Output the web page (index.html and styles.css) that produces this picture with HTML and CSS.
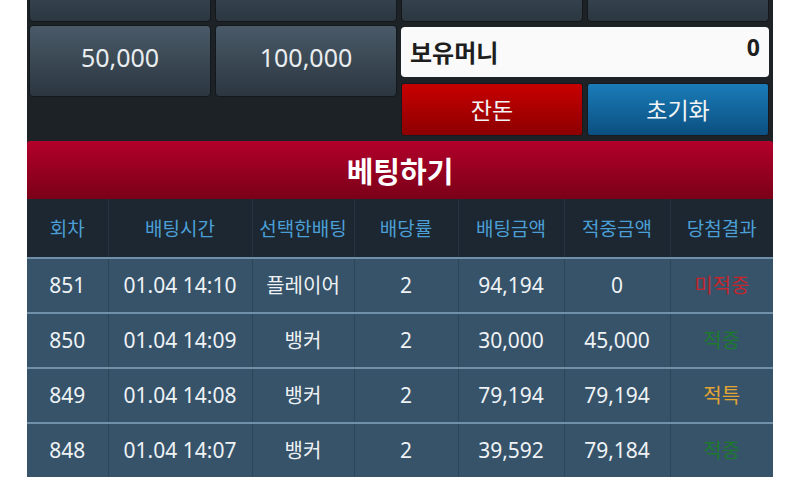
FILE: index.html
```html
<!DOCTYPE html>
<html lang="ko">
<head>
<meta charset="utf-8">
<title>베팅하기</title>
<link rel="stylesheet" href="styles.css">
</head>
<body>
<div class="panel">
  <div class="chips">
    <div class="chip-row">
      <button class="chip" aria-label="1,000"></button>
      <button class="chip" aria-label="5,000"></button>
      <button class="chip" aria-label="10,000"></button>
      <button class="chip" aria-label="30,000"></button>
    </div>
    <div class="controls">
      <div class="chip-pair">
        <button class="chip">50,000</button>
        <button class="chip">100,000</button>
      </div>
      <div class="wallet">
        <div class="money"><span class="money-label">보유머니</span><span class="money-value">0</span></div>
        <div class="actions">
          <button class="act red">잔돈</button>
          <button class="act blue">초기화</button>
        </div>
      </div>
    </div>
  </div>
  <div class="bet-bar">베팅하기</div>
  <table class="history">
    <colgroup>
      <col class="c1"><col class="c2"><col class="c3"><col class="c4"><col class="c5"><col class="c6"><col class="c7">
    </colgroup>
    <thead>
      <tr><th>회차</th><th>배팅시간</th><th>선택한배팅</th><th>배당률</th><th>배팅금액</th><th>적중금액</th><th>당첨결과</th></tr>
    </thead>
    <tbody>
      <tr><td>851</td><td>01.04 14:10</td><td class="ko">플레이어</td><td>2</td><td>94,194</td><td>0</td><td class="ko lose">미적중</td></tr>
      <tr><td>850</td><td>01.04 14:09</td><td class="ko">뱅커</td><td>2</td><td>30,000</td><td>45,000</td><td class="ko win">적중</td></tr>
      <tr><td>849</td><td>01.04 14:08</td><td class="ko">뱅커</td><td>2</td><td>79,194</td><td>79,194</td><td class="ko tie">적특</td></tr>
      <tr><td>848</td><td>01.04 14:07</td><td class="ko">뱅커</td><td>2</td><td>39,592</td><td>79,184</td><td class="ko win">적중</td></tr>
    </tbody>
  </table>
</div>
</body>
</html>
```
FILE: styles.css
```css
html, body {
  margin: 0;
  padding: 0;
  background: #ffffff;
  overflow: hidden;
}
body {
  font-family: "Noto Sans", "Noto Sans CJK KR", sans-serif;
  height: 477px;
}
.panel {
  margin: -52px 0 0 27px;
  width: 746px;
  background: #1d2227;
  min-height: 560px;
}
.chips {
  padding: 2px 4px 5px 2px;
  display: flex;
  flex-direction: column;
  gap: 3px;
}
.chip-row {
  display: grid;
  grid-template-columns: repeat(4, 1fr);
  gap: 4px;
}
.chip {
  height: 72px;
  border: 1px solid #14181c;
  border-radius: 4px;
  background: linear-gradient(#4a5a68, #2b3640);
  color: #e9edf0;
  font-family: inherit;
  font-size: 25px;
  padding: 0 0 8px 0;
}
.controls {
  display: grid;
  grid-template-columns: 1fr 1fr;
  gap: 4px;
}
.chip-pair {
  display: grid;
  grid-template-columns: 1fr 1fr;
  gap: 4px;
  align-self: start;
}
.wallet {
  display: flex;
  flex-direction: column;
  gap: 6px;
  padding-top: 2px;
}
.money {
  height: 50px;
  background: #fafafa;
  border-radius: 4px;
  display: flex;
  align-items: center;
  justify-content: space-between;
  padding: 0 9px 2px 9px;
  box-sizing: border-box;
  color: #1e1e1e;
  font-weight: 700;
}
.money-label {
  font-size: 24px;
}
.money-value {
  font-size: 23px;
  padding-bottom: 8px;
}
.actions {
  display: grid;
  grid-template-columns: 1fr 1fr;
  gap: 4px;
}
.act {
  height: 53px;
  border: 1px solid #161a1e;
  border-radius: 3px;
  color: #f2f4f6;
  font-family: inherit;
  font-size: 23px;
  padding: 0 0 2px 0;
}
.red {
  background: linear-gradient(#c80000, #8c0000);
}
.blue {
  background: linear-gradient(#1a7cb8, #0b4f80);
}
.bet-bar {
  height: 58px;
  background: linear-gradient(#b3002b, #7a0018);
  color: #ffffff;
  font-size: 29px;
  font-weight: 700;
  display: flex;
  align-items: center;
  justify-content: center;
  border-radius: 3px 3px 0 0;
  padding-bottom: 1px;
  box-sizing: border-box;
}
.history {
  width: 746px;
  border-collapse: collapse;
  table-layout: fixed;
}
.c1 { width: 81px; }
.c2 { width: 144px; }
.c3 { width: 102px; }
.c4 { width: 104px; }
.c5 { width: 106px; }
.c6 { width: 106px; }
.c7 { width: 103px; }
.history th {
  height: 58px;
  background: #1c2731;
  color: #4b9fd6;
  font-weight: 400;
  font-size: 19px;
  border-left: 1px solid #26333e;
  padding: 0;
}
.history th:first-child,
.history td:first-child {
  border-left: none;
}
.history td {
  height: 51px;
  background: #36536a;
  color: #eef2f5;
  font-size: 21px;
  text-align: center;
  border-top: 2px solid #6f90a8;
  border-left: 1px solid #2c4559;
  padding: 0 0 2px 0;
}
.history td.ko { font-size: 20px; }
.history td.lose { color: #c3262c; }
.history td.win { color: #1d7a2c; }
.history td.tie { color: #e2a531; }
```
